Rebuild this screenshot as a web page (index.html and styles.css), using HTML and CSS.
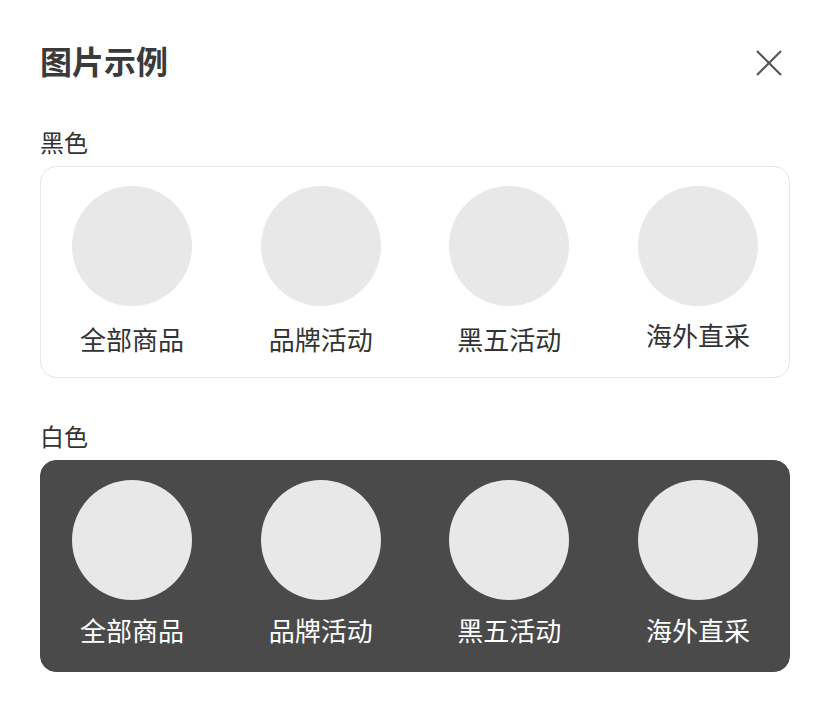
FILE: index.html
```html
<!DOCTYPE html>
<html lang="zh-CN">
<head>
<meta charset="utf-8">
<title>图片示例</title>
<link rel="stylesheet" href="styles.css">
</head>
<body>
<div class="dialog">
  <div class="header">
    <h1 class="title">图片示例</h1>
    <svg class="close" width="46" height="46" viewBox="0 0 46 46" aria-label="关闭">
      <line x1="12" y1="11" x2="36" y2="35" />
      <line x1="36" y1="11" x2="12" y2="35" />
    </svg>
  </div>

  <div class="section section-black">
    <div class="label">黑色</div>
    <div class="card card-light">
      <div class="item"><div class="circle"></div><div class="name">全部商品</div></div>
      <div class="item"><div class="circle"></div><div class="name">品牌活动</div></div>
      <div class="item"><div class="circle"></div><div class="name">黑五活动</div></div>
      <div class="item"><div class="circle"></div><div class="name name-up">海外直采</div></div>
    </div>
  </div>

  <div class="section section-white">
    <div class="label">白色</div>
    <div class="card card-dark">
      <div class="item"><div class="circle"></div><div class="name">全部商品</div></div>
      <div class="item"><div class="circle"></div><div class="name">品牌活动</div></div>
      <div class="item"><div class="circle"></div><div class="name">黑五活动</div></div>
      <div class="item"><div class="circle"></div><div class="name">海外直采</div></div>
    </div>
  </div>
</div>
</body>
</html>
```

FILE: styles.css
```css
* { box-sizing: border-box; }
html, body {
  margin: 0;
  padding: 0;
  background: #ffffff;
}
body {
  font-family: "Noto Sans CJK SC", "Noto Sans", sans-serif;
  color: #333333;
}
.dialog {
  width: 830px;
  padding: 40px 40px 0 40px;
}
.header {
  display: flex;
  align-items: center;
  justify-content: space-between;
  height: 46px;
}
.title {
  margin: 0 0 6px 0;
  font-size: 32px;
  line-height: 40px;
  font-weight: 700;
  color: #3a3a3a;
}
.close {
  display: block;
  margin-right: -1px;
}
.close line {
  stroke: #555555;
  stroke-width: 2.2;
  stroke-linecap: butt;
}
.section-black { margin-top: 39px; }
.section-white { margin-top: 41px; }
.label {
  font-size: 24px;
  line-height: 34px;
  color: #333333;
  margin-bottom: 7px;
}
.card {
  display: flex;
  justify-content: space-between;
  height: 212px;
  border-radius: 16px;
  padding: 19px 31px 0 31px;
  border: 1px solid transparent;
}
.card-light {
  border-color: #e6e6e6;
  background: #ffffff;
}
.card-dark {
  background: #4a4a4a;
  border-color: #4a4a4a;
}
.item {
  width: 120px;
  display: flex;
  flex-direction: column;
  align-items: center;
}
.circle {
  width: 120px;
  height: 120px;
  border-radius: 50%;
  background: #e8e8e8;
}
.name {
  font-size: 26px;
  line-height: 36px;
  white-space: nowrap;
  color: #333333;
}
.card-light .name { margin-top: 15px; }
.card-light .name-up { margin-top: 11px; }
.card-dark .name {
  color: #ffffff;
  margin-top: 12px;
}
```
